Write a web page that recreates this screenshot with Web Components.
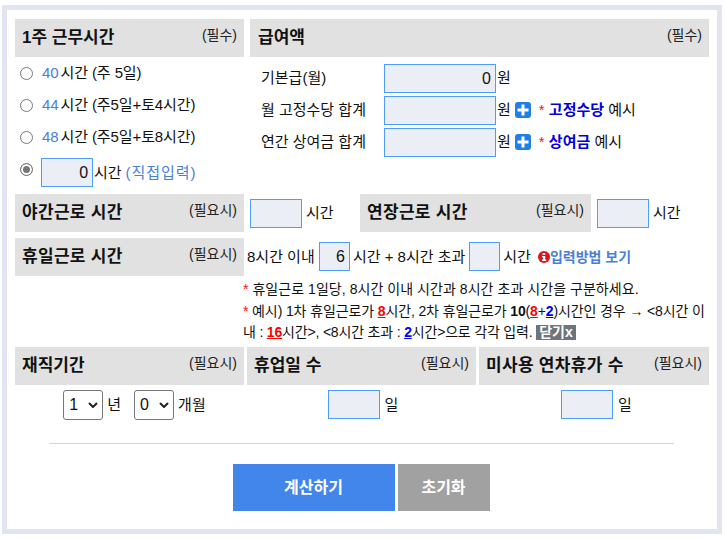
<!DOCTYPE html>
<html lang="ko"><head><meta charset="utf-8"><style>
html,body{margin:0;padding:0;background:#fff}
body{font:15px/20px "Liberation Sans","Noto Sans CJK KR",sans-serif;color:#111}
</style></head><body>
<wage-form></wage-form>
<template id="t-head"><style>
:host{display:flex;justify-content:space-between;height:38px;background:#e1e1e1;padding:0 7px;box-sizing:border-box}
.t{font-weight:700;font-size:17px;line-height:38px}
.n{font-size:14px;line-height:32px;color:#222}
</style><span class="t"><slot></slot></span><span class="n"><slot name="n"></slot></span></template>
<template id="t-num"><style>
:host{display:inline-block;box-sizing:border-box;height:29px;border:1px solid #4d9efa;background:#ebeff5;text-align:right;padding-right:4px;line-height:27px;font-size:16px;vertical-align:middle;color:#111;flex:none}
</style><slot></slot></template>
<template id="t-sel"><style>
:host{display:inline-flex;align-items:center;justify-content:space-between;box-sizing:border-box;width:40px;height:30px;margin-bottom:-1px;border:1px solid #767676;border-radius:3px;padding:0 4px 0 5px;font-size:16px;background:#fff;flex:none}
svg{display:block}
</style><slot></slot><svg width="10" height="6" viewBox="0 0 10 6"><path d="M1 1l4 4 4-4" fill="none" stroke="#222" stroke-width="2"/></svg></template>
<template id="t-radio"><style>
:host{display:inline-block;box-sizing:border-box;width:13px;height:13px;border:1px solid #767676;border-radius:50%;background:#fff;flex:none}
:host([on]){background:#777;box-shadow:inset 0 0 0 2px #fff}
</style></template>
<template id="t-plus"><style>
:host{display:inline-block;width:16px;height:16px;flex:none}
svg{display:block}
</style><svg width="16" height="16" viewBox="0 0 16 16"><rect width="16" height="16" rx="3" fill="#1f7fe8"/><path d="M8 2.5v11M2.5 8h11" stroke="#fff" stroke-width="3"/></svg></template>
<template id="t-info"><style>
:host{display:inline-block;width:12px;height:12px;flex:none}
svg{display:block}
</style><svg width="12" height="12" viewBox="0 0 12 12"><circle cx="6" cy="6" r="6" fill="#e0141c"/><rect x="4.6" y="2" width="2.6" height="2" fill="#fff"/><path d="M4 5h3.2v3.6H8.2V10H4V8.6h1V6.2H4z" fill="#fff"/></svg></template>
<template id="t-form"><style>
:host{display:block;box-sizing:border-box;width:720px;height:529px;margin:5px 0 0 2px;border:5px solid #e1e5f2;padding:9px 8px 0;background:#fff}
.top{display:grid;grid-template-columns:229px 459px;column-gap:6px}
.opts{display:grid;padding:0 0 0 5px;height:137px;grid-template-rows:32px 32px 32px 41px}
.o{display:flex;align-items:center;gap:9px;height:32px;letter-spacing:-.1px}
.b{color:#4a7fd6}
.n{margin-right:2px}
.pay{display:grid;grid-template-columns:123px auto;grid-auto-rows:32px;padding:5px 0 0 11px;align-items:center;align-content:start}
.r{display:flex;align-items:center;gap:1px;white-space:nowrap}
.r wage-plus{margin-left:3px}
.r .ex{margin-left:7px}
.red{color:#f11}.blue{color:#00d;font-weight:700}
.rw{display:grid;grid-template-columns:229px 116px 231px 112px}
.rw .c{display:flex;align-items:center;white-space:nowrap;padding-left:6px;gap:4px}
.wide{letter-spacing:.3px}
.hol{display:flex;margin-top:6px}
.hol>wage-head{width:229px;flex:none}
.ht{margin-left:3px;height:29px;margin-top:4px;display:flex;align-items:center;white-space:nowrap}
.a{margin:0 4px 0 3px}
.notes{margin:3px 0 0 228px;font-size:14px;line-height:21.5px;height:68px;width:470px;white-space:nowrap}
.notes div:nth-child(1){letter-spacing:.05px}
.notes div:nth-child(2){letter-spacing:-.12px}
.notes div:nth-child(3){letter-spacing:-.18px}
.notes b.r1{color:#f00;text-decoration:underline}.notes b.b1{color:#00e;text-decoration:underline}
.close{background:#6c757d;color:#fff;font-weight:700;padding:0 3px;display:inline-block;line-height:15px;letter-spacing:0}
.three{display:grid;grid-template-columns:229px 229px 230px;column-gap:3px}
.cell{display:flex;justify-content:center;align-items:center;height:29px;margin-top:5px;white-space:nowrap}
.cell .g{margin-left:4px}
.cell .d{margin-left:5px}
hr{border:0;border-top:1px solid #d4d4d4;margin:24px 35px 0 34px}
.btns{display:flex;justify-content:center;gap:3px;margin:20px 2px 0 0}
.btn{height:47px;display:flex;align-items:center;justify-content:center;color:#fff;font-weight:700;font-size:16px}
</style>
<div class="top">
  <wage-head>1주 근무시간<span slot="n">(필수)</span></wage-head>
  <wage-head><span style="margin-left:1px">급여액</span><span slot="n">(필수)</span></wage-head>
  <div class="opts">
    <div class="o"><wage-radio></wage-radio><span><span class="b n">40</span>시간 (주 5일)</span></div>
    <div class="o"><wage-radio></wage-radio><span><span class="b n">44</span>시간 (주5일+토4시간)</span></div>
    <div class="o"><wage-radio></wage-radio><span><span class="b n">48</span>시간 (주5일+토8시간)</span></div>
    <div class="o" style="height:41px;gap:8px;align-items:flex-start"><wage-radio on style="margin-top:10px"></wage-radio><span style="display:flex;align-items:center;gap:1px;margin-top:5px"><wage-num style="width:52px">0</wage-num>시간<span class="b" style="margin-left:3px;letter-spacing:1px">(직접입력)</span></span></div>
  </div>
  <div class="pay">
    <span>기본급(월)</span><span class="r"><wage-num style="width:112px">0</wage-num>원</span>
    <span>월 고정수당 합계</span><span class="r"><wage-num style="width:112px"></wage-num>원<wage-plus></wage-plus><span class="ex"><span class="red">*</span> <span class="blue">고정수당</span> 예시</span></span>
    <span>연간 상여금 합계</span><span class="r"><wage-num style="width:112px"></wage-num>원<wage-plus></wage-plus><span class="ex"><span class="red">*</span> <span class="blue">상여금</span> 예시</span></span>
  </div>
</div>
<div class="rw">
  <wage-head><span class="wide">야간근로 시간</span><span slot="n">(필요시)</span></wage-head>
  <div class="c"><wage-num style="width:52px"></wage-num>시간</div>
  <wage-head><span class="wide">연장근로 시간</span><span slot="n">(필요시)</span></wage-head>
  <div class="c"><wage-num style="width:52px"></wage-num>시간</div>
</div>
<div class="hol">
  <wage-head><span class="wide">휴일근로 시간</span><span slot="n">(필요시)</span></wage-head>
  <div class="ht">8시간 이내&nbsp;<wage-num style="width:31px">6</wage-num><span class="a">시간 + 8시간 초과</span><wage-num style="width:31px"></wage-num><span style="margin:0 7px 0 3px">시간</span><wage-info></wage-info><b style="color:#4a7fd6;font-size:14px">입력방법 보기</b></div>
</div>
<div class="notes"><div><span class="red">*</span> 휴일근로 1일당, 8시간 이내 시간과 8시간 초과 시간을 구분하세요.</div><div><span class="red">*</span> 예시) 1차 휴일근로가 <b class="r1">8</b>시간, 2차 휴일근로가 <b>10</b>(<b class="r1">8</b>+<b class="b1">2</b>)시간인 경우 → &lt;8시간 이</div><div>내 : <b class="r1">16</b>시간&gt;, &lt;8시간 초과 : <b class="b1">2</b>시간&gt;으로 각각 입력. <span class="close">닫기x</span></div></div>
<div class="three">
  <wage-head>재직기간<span slot="n">(필요시)</span></wage-head>
  <wage-head>휴업일 수<span slot="n">(필요시)</span></wage-head>
  <wage-head><span class="wide">미사용 연차휴가 수</span><span slot="n">(필요시)</span></wage-head>
  <div class="cell" style="padding-left:10px"><wage-sel>1</wage-sel><span class="g" style="margin-right:13px">년</span><wage-sel>0</wage-sel><span class="g">개월</span></div>
  <div class="cell" style="padding-left:3px"><wage-num style="width:52px"></wage-num><span class="d">일</span></div>
  <div class="cell" style="padding-left:5px"><wage-num style="width:52px"></wage-num><span class="d">일</span></div>
</div>
<hr>
<div class="btns"><div class="btn" style="width:162px;background:#4285eb">계산하기</div><div class="btn" style="width:92px;background:#a1a1a1">초기화</div></div>
</template>
<script>
for(const [n,t] of [['wage-head','t-head'],['wage-num','t-num'],['wage-sel','t-sel'],['wage-radio','t-radio'],['wage-plus','t-plus'],['wage-info','t-info'],['wage-form','t-form']]){
  customElements.define(n,class extends HTMLElement{constructor(){super();this.attachShadow({mode:'open'}).appendChild(document.getElementById(t).content.cloneNode(true))}});
}
</script>
</body></html>
